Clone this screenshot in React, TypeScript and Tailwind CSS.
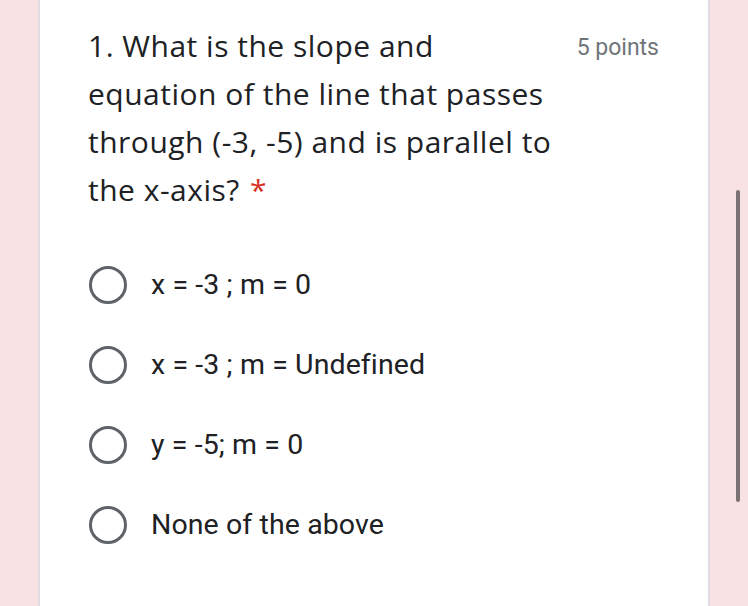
export default function App() {
  const options = ["x = -3 ; m = 0", "x = -3 ; m = Undefined", "y = -5; m = 0", "None of the above"];

  return (
    <div className="relative h-[606px] w-[748px] overflow-hidden bg-[#f9e2e4] font-['Roboto',sans-serif] text-[#202124]">
      <div className="ml-[38px] h-full w-[672px] border-x-2 border-[#e2dde3] bg-white pl-[48px] pr-[49px] pt-[22px]">
        {/* Question header */}
        <div className="flex items-start justify-between">
          <div className="font-['Open_Sans',sans-serif] text-[30px] leading-[48px] tracking-[0.5px]">
            <div>1. What is the slope and</div>
            <div>equation of the line that passes</div>
            <div>through (-3, -5) and is parallel to</div>
            <div>
              the x-axis? <span className="ml-[2px] text-[#d93025]">*</span>
            </div>
          </div>
          <div className="pt-[6px] text-[23px] leading-[40px] text-[#70757a]">5 points</div>
        </div>

        {/* Options */}
        <div className="mt-[31px] flex flex-col">
          {options.map((opt) => (
            <div key={opt} className="flex h-[80px] items-center">
              <div className="ml-[1px] h-[38px] w-[38px] shrink-0 rounded-full border-[3px] border-[#5f6368]" />
              <div className="ml-[24px] text-[28.5px] leading-[32px] tracking-[0.1px]">{opt}</div>
            </div>
          ))}
        </div>
      </div>

      {/* Scrollbar */}
      <div className="absolute left-[736px] top-[190px] h-[312px] w-[4px] rounded-full bg-[#7a7273]" />
    </div>
  );
}
